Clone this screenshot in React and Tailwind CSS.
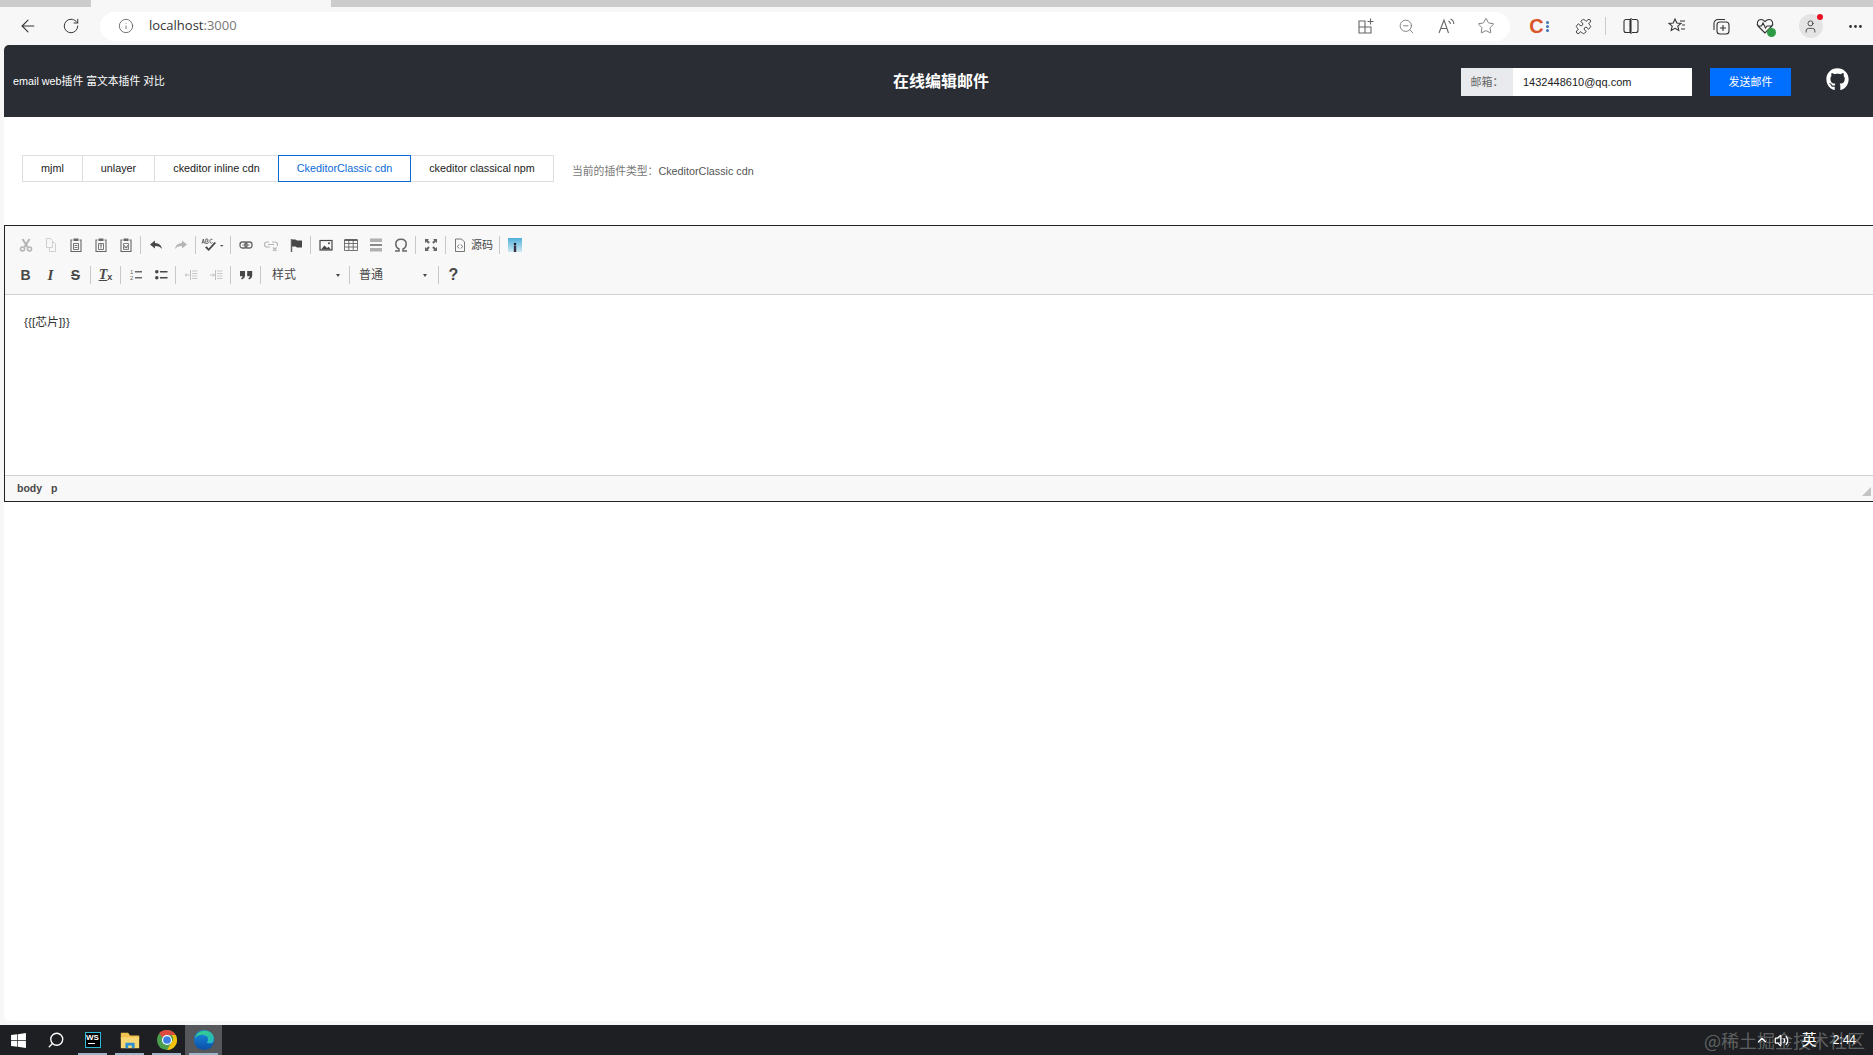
import React from 'react'
import { ArrowLeft, RotateCw, Info, ZoomOut, Star, Puzzle, Search, ChevronUp, Volume2, User, Ellipsis } from 'lucide-react'
import { FaGithub, FaWindows } from 'react-icons/fa'

const S = ({ children, className = '' }) => (
  <svg viewBox="0 0 16 16" width="16" height="16" className={className}>{children}</svg>
)

const dark = '#474747'
const mid = '#666666'
const light = '#b4b4b4'

const Cut = () => <S><path d="M4.500 2l5 8M11.500 2l-5 8" stroke={light} strokeWidth="2" fill="none"/><circle cx="4.500" cy="12" r="2" fill="none" stroke={light} strokeWidth="1.600"/><circle cx="11.500" cy="12" r="2" fill="none" stroke={light} strokeWidth="1.600"/></S>
const Copy = () => <S><path d="M3.500 1.500h4l2 2v7h-6zM9.500 5.500h2l1 1v8h-6v-4" fill="none" stroke="#cfcfcf"/></S>
const PasteBase = ({ children }) => (
  <S>
    <path d="M4.500 3H3v11.500h10V3h-1.500" fill="none" stroke={mid} strokeWidth="1.100"/>
    <rect x="5.500" y="1.500" width="5" height="2.500" fill={mid}/>
    {children}
  </S>
)
const Paste = () => <PasteBase><path d="M5.500 6.500h5v6h-5zM6.500 8.500h3M6.500 10.500h3" fill="none" stroke={mid} strokeWidth="0.900"/></PasteBase>
const PasteText = () => <PasteBase><path d="M5.500 6.500h5v6h-5zM6.800 8h2.400M8 8v3.500" fill="none" stroke={mid} strokeWidth="0.900"/></PasteBase>
const PasteWord = () => <PasteBase><path d="M5.500 6.500h5v6h-5zM6.500 8l.6 3.200L8 9.500l.9 1.700L9.500 8" fill="none" stroke={mid} strokeWidth="0.800"/></PasteBase>
const Undo = () => <S><path d="M7 3.500L2 7.500l5 4V9c3 0 5 .6 7 3-.4-3.600-3-6-7-6.100z" fill={dark}/></S>
const Redo = () => <S><path d="M9 3.500l5 4-5 4V9c-3 0-5 .6-7 3 .4-3.600 3-6 7-6.100z" fill={light}/></S>
const Spell = () => (
  <svg viewBox="0 0 24 16" width="24" height="16">
    <path d="M1 6.500l1.300-4.500 1.300 4.500M1.400 5.200h1.800M4.800 6.500V2h1.400c1.200 0 1.200 2.100 0 2.200 1.500 0 1.500 2.300 0 2.300zM11.500 3c-.5-1.300-2.600-1.100-2.600 1.200s2.100 2.600 2.600 1.300" fill="none" stroke={dark} strokeWidth="0.800"/>
    <path d="M4 10.500l1.800-1.300 1.800 2.300 6-6.500 1.400 1.100-7.300 8z" fill={dark}/>
    <path d="M19 8h3.500l-1.750 1.800z" fill={dark}/>
  </svg>
)
const LinkI = () => <S><rect x="2" y="5" width="7" height="6" rx="2.500" fill="none" stroke={mid} strokeWidth="1.300"/><rect x="7" y="5" width="7" height="6" rx="2.500" fill="none" stroke={mid} strokeWidth="1.300"/><path d="M4.500 8h7" stroke={mid} strokeWidth="1.200"/></S>
const Unlink = () => <S><path d="M6 5H4a2.500 2.500 0 000 5h3M9 5h3a2.500 2.500 0 012 4" fill="none" stroke={light} strokeWidth="1.200"/><path d="M5 7.500h6M10 10.500l3.500 3.500M13.500 10.500L10 14" stroke={light} strokeWidth="1.100"/></S>
const Flag = () => <S><path d="M3.500 2v13" stroke={mid} strokeWidth="1.500"/><path d="M4 2.500h3.500l1.500 1h5v7H9l-1.500-1H4z" fill={dark}/></S>
const ImageI = () => <S><rect x="2" y="3.500" width="12" height="9.500" fill="none" stroke={dark} strokeWidth="1.200"/><path d="M3 12.500l3.500-4 2.500 2.500 1.500-1.200 2.500 2.700z" fill={dark}/><circle cx="11" cy="6.300" r="1" fill={dark}/></S>
const Table = () => <S><path d="M1.500 3h13v10.500h-13zM1.500 6.500h13M1.500 10h13M5.800 3v10.500M10.200 3v10.500" fill="none" stroke={mid} strokeWidth="0.900"/><path d="M1.500 3h13" stroke={dark} strokeWidth="1.500"/></S>
const Hr = () => <S><path d="M2 1.500h12v3.500H2zM2 11h12v3.500H2z" fill="#b0b0b0"/><path d="M2 8h12" stroke={mid} strokeWidth="1.600"/></S>
const Omega = () => <S><path d="M2 14h4v-2C3.800 11 2.800 9 2.800 7 2.800 4 5 2.200 8 2.200S13.200 4 13.200 7c0 2-1 4-3.200 5v2h4" fill="none" stroke={mid} strokeWidth="1.500"/></S>
const Maximize = () => <S><path d="M2 2h4L4.800 3.300 6.800 5.300 5.300 6.800 3.300 4.800 2 6zM14 2v4l-1.300-1.200-2 2-1.500-1.500 2-2L10 2zM2 14v-4l1.300 1.200 2-2 1.500 1.500-2 2L6 14zM14 14h-4l1.200-1.300-2-2 1.500-1.500 2 2L14 10z" fill={mid}/></S>
const Source = () => <S><path d="M3.500 2h6l3 3v9.500h-9z" fill="none" stroke={mid} strokeWidth="0.900"/><path d="M7 7.500L5.500 9.500 7 11.500M9 7.500l1.500 2L9 11.500" fill="none" stroke={mid} strokeWidth="0.900"/></S>
const Photo = () => (
  <svg viewBox="0 0 16 16" width="16" height="16">
    <defs><linearGradient id="sky" x1="0" y1="0" x2="0" y2="1"><stop offset="0" stopColor="#4fb0dc"/><stop offset="1" stopColor="#cfe9f1"/></linearGradient></defs>
    <rect x="1" y="1" width="14" height="14" fill="url(#sky)"/>
    <circle cx="8" cy="7" r="1.300" fill="#223"/>
    <path d="M6.800 8.500h2.400V15H6.800z" fill="#334"/>
  </svg>
)
const Bold = () => <span className="text-[14px] font-bold text-[#474747] leading-none">B</span>
const Italic = () => <span className="text-[15px] font-bold italic text-[#474747] leading-none [font-family:'Liberation_Serif',serif]">I</span>
const Strike = () => <span className="text-[14px] font-bold text-[#474747] leading-none line-through">S</span>
const RemoveFormat = () => <span className="text-[14px] font-bold italic text-[#474747] leading-none [font-family:'Liberation_Serif',serif] flex items-end"><span className="underline">T</span><span className="text-[9px] not-italic [font-family:'Liberation_Sans',sans-serif]">x</span></span>
const OrderedList = () => <S><path d="M7 4h7v1.500H7zM7 10h7v1.500H7z" fill={mid}/><text x="2" y="6.500" fontSize="6" fill={mid} fontFamily="Liberation Sans">1</text><text x="2" y="12.500" fontSize="6" fill={mid} fontFamily="Liberation Sans">2</text></S>
const BulletList = () => <S><circle cx="3.800" cy="4.800" r="1.800" fill={dark}/><circle cx="3.800" cy="10.800" r="1.800" fill={dark}/><path d="M7 4h7.500v1.600H7zM7 10h7.500v1.600H7z" fill={dark}/></S>
const Outdent = () => <S><path d="M9 4h5.500M9 6.500h5.500M9 9h5.500M9 11.500h5.500" stroke="#c8c8c8"/><path d="M6.500 8H2M3.500 6.500L2 8l1.500 1.500M7.500 3v10" fill="none" stroke="#c0c0c0"/></S>
const Indent = () => <S><path d="M9 4h5.500M9 6.500h5.500M9 9h5.500M9 11.500h5.500" stroke="#c8c8c8"/><path d="M2 8h4.500M5 6.500L6.500 8 5 9.500M7.500 3v10" fill="none" stroke="#c0c0c0"/></S>
const Quote = () => <S><path d="M2 4h5v4.500c0 2-1.300 3.300-3.200 4l-.7-1.200c.9-.5 1.500-1.100 1.600-2H2zM9.200 4h5v4.500c0 2-1.300 3.300-3.200 4l-.7-1.200c.9-.5 1.500-1.100 1.600-2H9.200z" fill={dark}/></S>
const Help = () => <span className="text-[16px] font-bold text-[#474747] leading-none">?</span>

const Btn = ({ children, w = 'w-[25px]' }) => (
  <div className={`${w} h-[30px] flex items-center justify-center shrink-0`}>{children}</div>
)
const Sep = () => (
  <div className="w-[5px] h-[30px] flex items-center justify-center shrink-0">
    <div className="w-px h-[18px] bg-[#c8c8c8]" />
  </div>
)
const Combo = ({ label, w, pad }) => (
  <div className={`${w} ${pad} h-[30px] flex items-center justify-between shrink-0 text-[12px] text-[#484848]`}>
    <span>{label}</span>
    <span className="w-0 h-0 border-x-[2.500px] border-x-transparent border-t-[3px] border-t-[#474747]" />
  </div>
)

const Tab = ({ children, active, w }) => (
  <div className={`${w} h-[27px] flex items-center justify-center text-[10.800px] -ml-px first:ml-0 border ${active ? 'border-[#0b6bd6] text-[#0b6bd6] relative z-10' : 'border-[#dcdee2] text-[#222]'}`}>
    {children}
  </div>
)

const Tb = ({ children, w = 'w-[44px]' }) => (
  <div className={`${w} flex items-center justify-center shrink-0`}>{children}</div>
)

const Line = ({ children, size = 20, className = '' }) => (
  <svg viewBox="0 0 20 20" width={size} height={size} fill="none" stroke="currentColor" strokeWidth="1.100" className={className}>{children}</svg>
)
const AppAvail = () => <Line><path d="M3 5h6v6H3zM3 11h6v6H3zM9 11h6v6H9zM11.500 5.500h6M14.500 2.500v6"/></Line>
const ReadAloud = () => <Line><path d="M3 17L8 4l4.500 13M4.800 12.500h6.500M12.500 5c1.500.7 2 2 2 3M14.500 3c2.500 1.200 3.300 3 3.300 5"/></Line>
const SplitView = () => <Line><path d="M9 3.500H5a2 2 0 00-2 2v9a2 2 0 002 2h4zM11 3.500h4a2 2 0 012 2v9a2 2 0 01-2 2h-4M10 2v16"/></Line>
const Favorites = () => <Line><path d="M8 3l1.800 4 4.200.4-3.200 2.800 1 4.300L8 12.300l-3.800 2.200 1-4.300L2 7.400l4.200-.4zM13 5h5M15 9h3M14 13h4"/></Line>
const Collections = () => <Line><rect x="6" y="6" width="12" height="12" rx="3"/><path d="M12 9v6M9 12h6M14 3.500H7a4 4 0 00-4 4V14"/></Line>
const Health = () => (
  <div className="relative">
    <Line><path d="M10 17L3.500 10.500C1 8 2.500 3.500 6 3.500c2 0 3 1 4 2.200 1-1.200 2-2.200 4-2.200 3.500 0 5 4.500 2.500 7L10 17zM2.500 10h4l1.500-3 2.500 5 1.500-2h5.500"/></Line>
    <div className="absolute -right-[1px] -bottom-[1px] w-[9px] h-[9px] rounded-full bg-[#2e9b46]" />
  </div>
)
const CExt = () => (
  <div className="flex items-center gap-[2px]">
    <span className="text-[#d9552b] font-bold text-[20px] leading-none">C</span>
    <div className="flex flex-col gap-[1px]">
      <div className="w-[3px] h-[3px] bg-[#3f77b5] rounded-full" />
      <div className="w-[3px] h-[3px] bg-[#3f77b5] rounded-full" />
      <div className="w-[3px] h-[3px] bg-[#3f77b5] rounded-full" />
    </div>
  </div>
)

const Edge = () => (
  <svg viewBox="0 0 24 24" width="22" height="22">
    <defs>
      <linearGradient id="eg1" x1="0" y1="0" x2="1" y2="1"><stop offset="0" stopColor="#3bd37d"/><stop offset="1" stopColor="#1fb5c9"/></linearGradient>
      <linearGradient id="eg2" x1="0" y1="0" x2="0" y2="1"><stop offset="0" stopColor="#1a8fe0"/><stop offset="1" stopColor="#0a4fa8"/></linearGradient>
    </defs>
    <circle cx="12" cy="12" r="11" fill="url(#eg2)"/>
    <path d="M2 10C4 3 12 0 18 3c4 2 6 7 4 11-1 2-5 2-7 1 2-2 2-5 0-7-4-3-10-2-13 2z" fill="url(#eg1)"/>
  </svg>
)
const Chrome = () => (
  <svg viewBox="0 0 24 24" width="22" height="22">
    <circle cx="12" cy="12" r="11" fill="#4a9e4e"/>
    <path d="M12 1a11 11 0 019.500 5.500H12a5.500 5.500 0 00-5 3L3.500 4.500A11 11 0 0112 1z" fill="#dd4b3e"/>
    <path d="M21.500 6.500A11 11 0 0112 23l4.800-8.300a5.500 5.500 0 00.2-8.200z" fill="#f4c20d"/>
    <circle cx="12" cy="12" r="5.500" fill="#fff"/>
    <circle cx="12" cy="12" r="4.200" fill="#3b7de0"/>
  </svg>
)
const Folder = () => (
  <svg viewBox="0 0 24 24" width="22" height="22">
    <path d="M2 4h8l2 3h10v4H2z" fill="#f2c14e"/>
    <path d="M2 9h20v12H2z" fill="#f7d774"/>
    <path d="M7 21v-6h10v6h-3v-3h-4v3z" fill="#2f8fd0"/>
  </svg>
)
const Ws = () => (
  <div className="w-[16px] h-[16px] bg-black border border-[#2fb8d8] flex flex-col items-center text-white text-[8px] font-bold leading-[10px]">
    WS
    <div className="w-[7px] h-px bg-white self-start ml-[2px]" />
  </div>
)
const TaskItem = ({ children, active, running }) => (
  <div className={`w-[37px] h-[30px] relative flex items-center justify-center shrink-0 ${active ? 'bg-[#55575a]' : ''}`}>
    {children}
    {running && <div className="absolute bottom-0 left-[4px] right-[4px] h-[2px] bg-[#9fb4c4]" />}
  </div>
)

export default function App() {
  return (
    <div className="h-[1055px] flex flex-col bg-[#f7f7f7] overflow-hidden [font-family:'Liberation_Sans','Noto_Sans_CJK_SC',sans-serif]">
      {/* browser tabs */}
      <div className="h-[7px] bg-[#cccccc] shrink-0 flex">
        <div className="ml-[91px] w-[240px] bg-[#f7f7f7]" />
      </div>
      {/* browser toolbar */}
      <div className="h-[38px] shrink-0 flex items-center text-[#333]">
        <div className="w-[100px] flex items-center pl-[18px] gap-[24px] shrink-0">
          <ArrowLeft size={20} strokeWidth={1.300} />
          <RotateCw size={18} strokeWidth={1.300} />
        </div>
        <div className="w-[1410px] h-[29px] bg-white rounded-full flex items-center pl-[18px] pr-[4px] shrink-0">
          <Info size={16} strokeWidth={1.200} className="text-[#555]" />
          <span className="ml-[15px] text-[13px] [font-family:'Open_Sans',sans-serif]">localhost<span className="text-[#777]">:3000</span></span>
          <div className="ml-auto flex text-[#666]">
            <Tb w="w-[40px]"><AppAvail /></Tb>
            <Tb w="w-[40px]"><ZoomOut size={17} strokeWidth={1.100} /></Tb>
            <Tb w="w-[40px]"><ReadAloud /></Tb>
            <Tb w="w-[40px]"><Star size={18} strokeWidth={1.100} /></Tb>
          </div>
        </div>
        <div className="flex items-center pl-[7px]">
          <Tb><CExt /></Tb>
          <Tb w="w-[44px]"><Puzzle size={17} strokeWidth={1.300} /></Tb>
          <div className="w-px h-[18px] bg-[#ccc]" />
          <Tb w="w-[49px]"><SplitView /></Tb>
          <Tb><Favorites /></Tb>
          <Tb><Collections /></Tb>
          <Tb><Health /></Tb>
          <Tb w="w-[47px]">
            <div className="relative w-[24px] h-[24px] rounded-full bg-[#e4e4e4] flex items-center justify-center">
              <User size={15} strokeWidth={1.300} />
              <div className="absolute right-0 top-0 w-[6px] h-[6px] rounded-full bg-[#e81123]" />
            </div>
          </Tb>
          <Tb w="w-[42px]"><Ellipsis size={17} /></Tb>
        </div>
      </div>

      {/* page */}
      <div className="flex-1 ml-[4px] mb-[4px] bg-white rounded-tl-[5px] rounded-bl-[5px] overflow-hidden">
        <header className="h-[72px] bg-[#2a2d33] grid grid-cols-[1fr_auto_1fr] items-center pl-[9px] pr-[24px] text-white">
          <div className="text-[10.800px] leading-none">email web插件 富文本插件 对比</div>
          <div className="text-[16px] font-bold leading-[20px] pl-[20px] pt-[2px]">在线编辑邮件</div>
          <div className="justify-self-end flex items-center">
            <div className="flex h-[28px] w-[231px] bg-white mt-[2px]">
              <div className="w-[52px] bg-[#e8eaee] text-[#666] text-[11px] flex items-center justify-center">邮箱：</div>
              <div className="flex-1 pl-[10px] text-[#222] text-[11px] flex items-center">1432448610@qq.com</div>
            </div>
            <div className="ml-[18px] mt-[2px] w-[81px] h-[28px] bg-[#006eff] text-[11px] flex items-center justify-center">发送邮件</div>
            <FaGithub size={23} className="ml-[35px] -mt-[4px]" />
          </div>
        </header>

        <div className="pl-[18px] pt-[38px] flex items-center">
          <div className="flex">
            <Tab w="w-[61px]">mjml</Tab>
            <Tab w="w-[73px]">unlayer</Tab>
            <Tab w="w-[125px]">ckeditor inline cdn</Tab>
            <Tab w="w-[133px]" active>CkeditorClassic cdn</Tab>
            <Tab w="w-[144px]">ckeditor classical npm</Tab>
          </div>
          <div className="ml-[18px] mt-[5px] text-[10.800px] text-[#777]">当前的插件类型：<span className="text-[#555]">CkeditorClassic cdn</span></div>
        </div>

        {/* editor */}
        <div className="mt-[43px] border-y border-l border-[#222] h-[277px] flex flex-col">
          <div className="h-[69px] bg-[#f8f8f8] border-b border-[#d1d1d1] pl-[8px] pt-[4px] shrink-0">
            <div className="flex h-[30px]">
              <Btn><Cut /></Btn><Btn><Copy /></Btn><Btn><Paste /></Btn><Btn><PasteText /></Btn><Btn><PasteWord /></Btn>
              <Sep />
              <Btn><Undo /></Btn><Btn><Redo /></Btn>
              <Sep />
              <Btn w="w-[30px]"><Spell /></Btn>
              <Sep />
              <Btn><LinkI /></Btn><Btn><Unlink /></Btn><Btn><Flag /></Btn>
              <Sep />
              <Btn><ImageI /></Btn><Btn><Table /></Btn><Btn><Hr /></Btn><Btn><Omega /></Btn>
              <Sep />
              <Btn><Maximize /></Btn>
              <Sep />
              <Btn w="w-[49px]"><span className="flex items-center gap-[3px] text-[11px] text-[#484848]"><Source />源码</span></Btn>
              <Sep />
              <Btn><Photo /></Btn>
            </div>
            <div className="flex h-[30px]">
              <Btn><Bold /></Btn><Btn><Italic /></Btn><Btn><Strike /></Btn>
              <Sep />
              <Btn><RemoveFormat /></Btn>
              <Sep />
              <Btn><OrderedList /></Btn><Btn><BulletList /></Btn>
              <Sep />
              <Btn><Outdent /></Btn><Btn><Indent /></Btn>
              <Sep />
              <Btn><Quote /></Btn>
              <Sep />
              <Combo label="样式" w="w-[84px]" pad="pl-[9px] pr-[7px]" />
              <Sep />
              <Combo label="普通" w="w-[84px]" pad="pl-[7px] pr-[9px]" />
              <Sep />
              <Btn><Help /></Btn>
            </div>
          </div>
          <div className="flex-1 px-[19px] pt-[17px] text-[11.800px] text-[#333] leading-[20px]">{'{{[芯片]}}'}</div>
          <div className="h-[26px] shrink-0 bg-[#f8f8f8] border-t border-[#d1d1d1] flex items-center pl-[12px] gap-[9px] relative text-[10.500px] font-bold text-[#484848]">
            <span>body</span>
            <span>p</span>
            <div className="absolute right-[2px] bottom-[5px] w-0 h-0 border-l-[9px] border-l-transparent border-b-[9px] border-b-[#c4c4c4]" />
          </div>
        </div>
      </div>

      {/* taskbar */}
      <div className="h-[30px] bg-[#1d1f22] shrink-0 flex items-center relative text-white">
        <TaskItem><FaWindows size={17} /></TaskItem>
        <TaskItem><Search size={18} strokeWidth={1.800} className="-scale-x-100" /></TaskItem>
        <TaskItem running><Ws /></TaskItem>
        <TaskItem running><Folder /></TaskItem>
        <TaskItem running><Chrome /></TaskItem>
        <TaskItem active running><Edge /></TaskItem>
        <div className="ml-auto flex items-center pr-[17px] text-[12px]">
          <ChevronUp size={14} />
          <Volume2 size={15} className="ml-[5px]" />
          <span className="text-[15px] ml-[13px]">英</span>
          <span className="ml-[16px]">2:44</span>
        </div>
        <div className="absolute right-[8px] top-[4px] text-[18px] leading-[22px] text-white/30 pointer-events-none [font-family:'Noto_Sans_CJK_SC',sans-serif]">@稀土掘金技术社区</div>
      </div>
    </div>
  )
}
